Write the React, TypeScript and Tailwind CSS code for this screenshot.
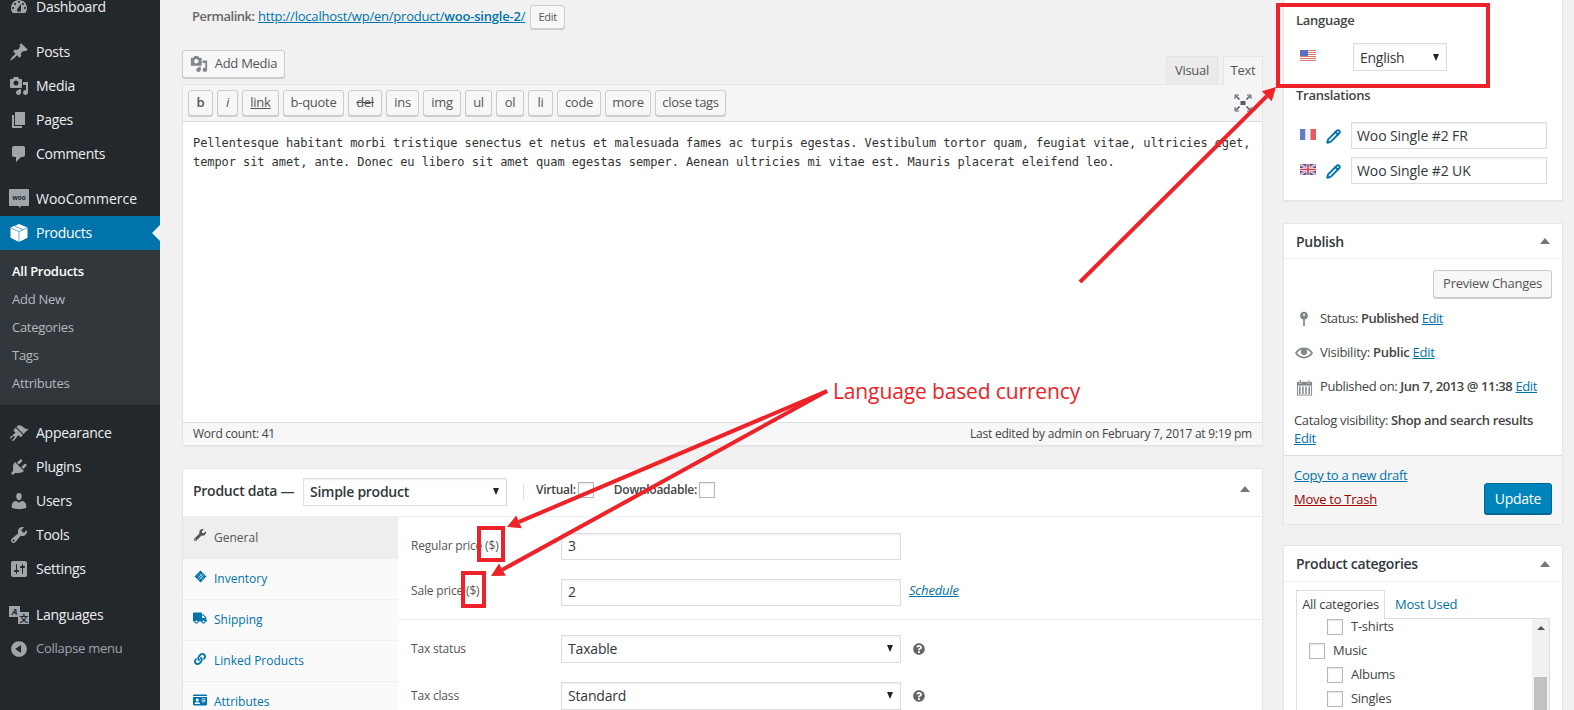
import type { ReactNode } from 'react';
import { Pencil } from 'lucide-react';
import { FaWrench, FaTruck, FaLink, FaIdCard, FaQuestionCircle } from 'react-icons/fa';

const Dash = ({ d, className = 'text-[#a0a5aa]', size = 20 }: { d: string; className?: string; size?: number }) => (
  <svg viewBox="0 0 20 20" width={size} height={size} fill="currentColor" fillRule="evenodd" className={className}>
    <path d={d} />
  </svg>
);

const ICONS = {
  dashboard:
    'M3.76 16h12.48c1.1-1.37 1.76-3.11 1.76-5 0-4.42-3.58-8-8-8s-8 3.58-8 8c0 1.89.66 3.63 1.76 5zM10 4c.55 0 1 .45 1 1s-.45 1-1 1-1-.45-1-1 .45-1 1-1zM6 6c.55 0 1 .45 1 1s-.45 1-1 1-1-.45-1-1 .45-1 1-1zm8 0c.55 0 1 .45 1 1s-.45 1-1 1-1-.45-1-1 .45-1 1-1zm-5.37 5.55L12 7v6c0 1.1-.9 2-2 2s-2-.9-2-2c0-.57.24-1.08.63-1.45zM4 10c.55 0 1 .45 1 1s-.45 1-1 1-1-.45-1-1 .45-1 1-1zm12 0c.55 0 1 .45 1 1s-.45 1-1 1-1-.45-1-1 .45-1 1-1z',
  posts:
    'M10.44 3.02l1.82-1.82 6.36 6.35-1.83 1.82c-1.05-.68-2.48-.57-3.41.36l-.75.75c-.92.93-1.04 2.35-.35 3.41l-1.83 1.82-2.41-2.41-2.8 2.79c-.42.42-3.38 2.71-3.8 2.29s1.86-3.39 2.28-3.81l2.79-2.79L4.1 9.36l1.83-1.82c1.05.69 2.48.57 3.4-.36l.75-.75c.93-.92 1.05-2.35.36-3.41z',
  media:
    'M13 11V4c0-.55-.45-1-1-1h-1.67L9 1H5L3.67 3H2c-.55 0-1 .45-1 1v7c0 .55.45 1 1 1h10c.55 0 1-.45 1-1zM7 4.5c1.38 0 2.5 1.12 2.5 2.5S8.38 9.5 7 9.5 4.5 8.38 4.5 7 5.62 4.5 7 4.5zM14 6h5v10.5c0 1.38-1.12 2.5-2.5 2.5S14 17.88 14 16.5s1.12-2.5 2.5-2.5c.17 0 .34.02.5.05V9h-3V6zm-4 8.05V13h2v3.5c0 1.38-1.12 2.5-2.5 2.5S7 17.88 7 16.5 8.12 14 9.5 14c.17 0 .34.02.5.05z',
  pages: 'M6 15V2h10v13H6zm-1 1h8v2H3V5h2v11z',
  comments: 'M5 2h9c1.1 0 2 .9 2 2v7c0 1.1-.9 2-2 2h-2l-5 5v-5H5c-1.1 0-2-.9-2-2V4c0-1.1.9-2 2-2z',
  appearance:
    'M14.48 11.06L7.41 3.99l1.5-1.5c.5-.56 2.3-.47 3.51.32 1.21.8 1.43 1.28 2.91 2.1 1.18.64 2.45 1.26 4.45.85zm-.71.71L6.7 4.7 4.93 6.47c-.39.39-.39 1.02 0 1.41l1.06 1.06c.39.39.39 1.03 0 1.42-.6.6-1.43 1.11-2.21 1.69-.35.26-.7.53-1.01.84C1.43 13.23 1 14.1 1 15c0 .36.1.7.25 1l2.7-2.69c.39-.39 1.03-.39 1.42 0s.39 1.03 0 1.41l-2.7 2.7c.3.15.64.24 1 .24.9 0 1.77-.43 2.58-1.77.31-.31.58-.66.84-1.01.58-.78 1.09-1.61 1.69-2.21.39-.39 1.03-.39 1.42 0l1.06 1.06c.39.39 1.02.39 1.41 0z',
  plugins:
    'M13.11 4.36L9.87 7.6 8 5.73l3.24-3.24c.35-.34 1.05-.2 1.56.32.52.51.66 1.21.31 1.55zm-8 1.77l.91-1.12 9.01 9.01-1.19.84c-.71.71-2.63 1.16-3.82 1.16H6.14L4.9 17.26c-.59.59-1.54.59-2.12 0-.59-.58-.59-1.53 0-2.12l1.24-1.24v-3.88c0-1.13.4-3.19 1.09-3.89zm7.26 3.97l3.24-3.24c.34-.35 1.04-.21 1.55.31.52.51.66 1.21.31 1.55l-3.24 3.25z',
  users:
    'M10 9.25c-2.27 0-2.73-3.44-2.73-3.44C7 4.02 7.82 2 9.97 2c2.16 0 2.98 2.02 2.71 3.81 0 0-.41 3.44-2.68 3.44zm0 2.57L12.72 10c2.39 0 4.52 2.33 4.52 4.53v2.49s-3.65 1.13-7.24 1.13c-3.65 0-7.24-1.13-7.24-1.13v-2.49c0-2.25 1.94-4.48 4.47-4.48z',
  tools:
    'M16.68 9.77c-1.34 1.34-3.3 1.67-4.95.99l-5.41 6.52c-.99.99-2.59.99-3.58 0s-.99-2.59 0-3.57l6.52-5.42c-.68-1.65-.35-3.61.99-4.95 1.28-1.28 3.12-1.62 4.72-1.06l-2.89 2.89 2.82 2.82 2.86-2.87c.53 1.58.18 3.39-1.08 4.67zM3.81 16.21c.4.39 1.04.39 1.43 0 .4-.4.4-1.04 0-1.43-.39-.4-1.03-.4-1.43 0-.39.39-.39 1.03 0 1.43z',
  settings:
    'M18 16V4c0-1.1-.9-2-2-2H4c-1.1 0-2 .9-2 2v12c0 1.1.9 2 2 2h12c1.1 0 2-.9 2-2zM8 11h1c.55 0 1 .45 1 1s-.45 1-1 1H8v1.5c0 .28-.22.5-.5.5s-.5-.22-.5-.5V13H6c-.55 0-1-.45-1-1s.45-1 1-1h1V5.5c0-.28.22-.5.5-.5s.5.22.5.5V11zm5-2h-1c-.55 0-1-.45-1-1s.45-1 1-1h1V5.5c0-.28.22-.5.5-.5s.5.22.5.5V7h1c.55 0 1 .45 1 1s-.45 1-1 1h-1v5.5c0 .28-.22.5-.5.5s-.5-.22-.5-.5V9z',
  collapse: 'M10 2.16c4.33 0 7.84 3.51 7.84 7.84s-3.51 7.84-7.84 7.84S2.16 14.33 2.16 10 5.71 2.16 10 2.16zm2 11.72V6.12L6.18 9.97z',
  eye: 'M19.7 9.4C17.7 6 14 3.9 10 3.9S2.3 6 .3 9.4L0 10l.3.6c2 3.4 5.7 5.5 9.7 5.5s7.7-2.1 9.7-5.5l.3-.6-.3-.6zM10 14.1c-3.1 0-6-1.6-7.7-4.1C3.6 8 5.7 6.6 8 6.1c-.9.6-1.5 1.7-1.5 2.9 0 1.9 1.6 3.5 3.5 3.5s3.5-1.6 3.5-3.5c0-1.2-.6-2.3-1.5-2.9 2.3.5 4.4 1.9 5.7 3.9-1.7 2.5-4.6 4.1-7.7 4.1z',
};

const WooIcon = () => (
  <svg viewBox="0 0 20 20" width={20} height={20}>
    <path d="M1 0h18a1 1 0 0 1 1 1v15a1 1 0 0 1-1 1h-7l-1.5 2.5L10 17H1a1 1 0 0 1-1-1V1a1 1 0 0 1 1-1z" fill="#a0a5aa" />
    <text x="10" y="10.5" textAnchor="middle" fontSize="6.5" fontWeight="700" letterSpacing="0" fill="#23282d" fontFamily="Open Sans, sans-serif">woo</text>
  </svg>
);

const BoxIcon = () => (
  <svg viewBox="0 0 20 20" width={20} height={20}>
    <path d="M10 1l8.5 3.6v10.2L10 19l-8.5-4.2V4.6z" fill="#fff" />
    <path d="M1.5 4.8L10 8.6l8.5-3.8M10 8.6V19M5.5 3l8.5 3.7" stroke="#0073aa" strokeWidth="0.6" fill="none" />
  </svg>
);

const TranslateIcon = () => (
  <svg viewBox="0 0 20 20" width={20} height={20}>
    <rect x="0" y="1" width="11" height="11" fill="#a0a5aa" />
    <text x="5.5" y="10" textAnchor="middle" fontSize="9" fontStyle="italic" fontWeight="700" fill="#23282d" fontFamily="Open Sans, sans-serif">A</text>
    <rect x="9" y="7" width="11" height="12" fill="#a0a5aa" />
    <text x="14.5" y="17" textAnchor="middle" fontSize="9" fontWeight="700" fill="#23282d" fontFamily="Noto Sans CJK SC, sans-serif">文</text>
  </svg>
);

function MenuItem({ icon, label, active, dim, labelClass = 'text-[14px]' }: { icon: ReactNode; label: string; active?: boolean; dim?: boolean; labelClass?: string }) {
  return (
    <div className={`relative flex h-[34px] items-center ${active ? 'bg-[#0073aa] text-white' : dim ? 'text-[#a0a5aa]' : 'text-[#eeeeee]'}`}>
      <span className="flex w-9 justify-center pl-px">{icon}</span>
      <span className={`-mt-px ${labelClass}`}>{label}</span>
      {active && <span className="absolute right-0 top-[9px] h-0 w-0 border-y-[8px] border-r-[8px] border-y-transparent border-r-[#f1f1f1]" />}
    </div>
  );
}

function Sidebar() {
  const d = (k: keyof typeof ICONS) => <Dash d={ICONS[k]} />;
  return (
    <aside className="h-full w-40 shrink-0 overflow-hidden bg-[#23282d]">
      <div className="-mt-[10px]">
        <MenuItem icon={d('dashboard')} label="Dashboard" />
        <div className="h-[11px]" />
        <MenuItem icon={d('posts')} label="Posts" />
        <MenuItem icon={d('media')} label="Media" />
        <MenuItem icon={d('pages')} label="Pages" />
        <MenuItem icon={d('comments')} label="Comments" />
        <div className="h-[11px]" />
        <MenuItem icon={<WooIcon />} label="WooCommerce" labelClass="text-[14px] tracking-normal" />
        <MenuItem icon={<BoxIcon />} label="Products" active />
        <div className="bg-[#32373c] pb-[7px] pt-[8px] text-[13px] text-[#b4b9be]">
          <div className="flex h-7 items-center pl-3 font-semibold text-white">All Products</div>
          <div className="flex h-7 items-center pl-3">Add New</div>
          <div className="flex h-7 items-center pl-3">Categories</div>
          <div className="flex h-7 items-center pl-3">Tags</div>
          <div className="flex h-7 items-center pl-3">Attributes</div>
        </div>
        <div className="h-[11px]" />
        <MenuItem icon={d('appearance')} label="Appearance" />
        <MenuItem icon={d('plugins')} label="Plugins" />
        <MenuItem icon={d('users')} label="Users" />
        <MenuItem icon={d('tools')} label="Tools" />
        <MenuItem icon={d('settings')} label="Settings" />
        <div className="h-3" />
        <MenuItem icon={<TranslateIcon />} label="Languages" />
        <MenuItem icon={d('collapse')} label="Collapse menu" dim labelClass="text-[13px]" />
      </div>
    </aside>
  );
}

const toolbarButtons = [
  { label: 'b', cls: 'w-[25px] font-semibold' },
  { label: 'i', cls: 'w-[21px] italic' },
  { label: 'link', cls: 'w-[37px] underline' },
  { label: 'b-quote', cls: 'w-[61px]' },
  { label: 'del', cls: 'w-[34px] line-through' },
  { label: 'ins', cls: 'w-[33px]' },
  { label: 'img', cls: 'w-[38px]' },
  { label: 'ul', cls: 'w-[27px]' },
  { label: 'ol', cls: 'w-[28px]' },
  { label: 'li', cls: 'w-[25px]' },
  { label: 'code', cls: 'w-[44px]' },
  { label: 'more', cls: 'w-[46px]' },
  { label: 'close tags', cls: 'w-[71px]' },
];

const btn = 'flex items-center justify-center rounded-[3px] border border-[#cccccc] bg-[#f7f7f7] text-[#555555] shadow-[0_1px_0_#cccccc]';

function FullscreenIcon() {
  return (
    <svg viewBox="0 0 18 18" width={18} height={18} fill="none" stroke="#555d66" strokeWidth="1.6">
      <rect x="6.5" y="7" width="5" height="4" fill="#555d66" stroke="none" />
      <path d="M2 2l3.5 3.5M16 2l-3.5 3.5M2 16l3.5-3.5M16 16l-3.5-3.5" />
      <path d="M1 5V1h4M13 1h4v4M1 13v4h4M13 17h4v-4" strokeWidth="1" />
    </svg>
  );
}

function Editor() {
  return (
    <div>
      <div className="flex h-[34px] justify-between">
        <div className={`${btn} h-7 w-[103px] gap-[7px] text-[13px]`}>
          <Dash d={ICONS.media} size={18} className="text-[#82878c]" />
          Add Media
        </div>
        <div className="flex items-end gap-[5px] pr-0">
          <div className="flex h-7 w-[52px] items-center justify-center border border-b-0 border-[#e5e5e5] bg-[#ebebeb] text-[13px] text-[#555555]">Visual</div>
          <div className="relative z-10 -mb-px flex h-[29px] w-10 items-center justify-center border border-b-0 border-[#e5e5e5] bg-[#f5f5f5] text-[13px] text-[#555555]">Text</div>
        </div>
      </div>
      <div className="border border-[#e5e5e5] shadow-[0_1px_1px_rgba(0,0,0,0.04)]">
        <div className="flex h-[37px] items-center justify-between border-b border-[#dddddd] bg-[#f5f5f5] pl-[5px] pr-[10px]">
          <div className="flex gap-1">
            {toolbarButtons.map((b) => (
              <div key={b.label} className={`${btn} h-[26px] text-[13px] ${b.cls}`}>{b.label}</div>
            ))}
          </div>
          <FullscreenIcon />
        </div>
        <div className="h-[300px] bg-white pl-[10px] pr-2 pt-[12px] font-['DejaVu_Sans_Mono',monospace] text-[12px] leading-[19px] tracking-[-0.08px] text-[#333333]">
          Pellentesque habitant morbi tristique senectus et netus et malesuada fames ac turpis egestas. Vestibulum tortor quam, feugiat vitae, ultricies eget, tempor sit amet, ante. Donec eu libero sit amet quam egestas semper. Aenean ultricies mi vitae est. Mauris placerat eleifend leo.
        </div>
        <div className="flex h-[23px] items-center justify-between border-t border-[#dddddd] bg-[#f7f7f7] px-[10px] text-[12px] text-[#444444]">
          <span>Word count: 41</span>
          <span className="tracking-[-0.23px]">Last edited by admin on February 7, 2017 at 9:19 pm</span>
        </div>
      </div>
    </div>
  );
}

const UpArrow = () => <span className="h-0 w-0 border-x-[5px] border-b-[6px] border-x-transparent border-b-[#72777c]" />;

const SelectArrow = () => <span className="h-0 w-0 border-x-[3.5px] border-t-[7px] border-x-transparent border-t-[#222222]" />;

function FakeSelect({ value, className }: { value: string; className: string }) {
  return (
    <div className={`flex h-7 items-center justify-between border border-[#dddddd] bg-white pl-[6px] pr-[7px] text-[#32373c] shadow-[inset_0_1px_2px_rgba(0,0,0,0.07)] ${className}`}>
      <span>{value}</span>
      <SelectArrow />
    </div>
  );
}

const field = 'block border border-[#dddddd] bg-white text-[#32373c] tracking-[-0.1px] shadow-[inset_0_1px_2px_rgba(0,0,0,0.07)] outline-none';

const Check = ({ className = '' }: { className?: string }) => (
  <span className={`block h-4 w-4 shrink-0 border border-[#b4b9be] bg-white shadow-[inset_0_1px_2px_rgba(0,0,0,0.1)] ${className}`} />
);

function InventoryIcon() {
  return (
    <svg viewBox="0 0 14 14" width={13} height={13}>
      <rect x="2.5" y="2.5" width="9" height="9" transform="rotate(45 7 7)" fill="#0073aa" />
      <path d="M4.5 5.5l5 5M6 4l5 5M9.5 3.5l-6 6M11 5l-6 6" stroke="#fff" strokeWidth="0.6" />
    </svg>
  );
}

function ProductTab({ icon, label, active, className }: { icon: ReactNode; label: string; active?: boolean; className: string }) {
  return (
    <div className={`flex items-center gap-[7px] border-b border-[#eeeeee] pl-[10px] text-[12px] tracking-normal ${active ? 'bg-[#eeeeee] text-[#555555]' : 'text-[#0073aa]'} ${className}`}>
      <span className={`mb-[5px] flex w-[14px] justify-center ${active ? 'text-[#555555]' : 'text-[#0073aa]'}`}>{icon}</span>
      {label}
    </div>
  );
}

function ProductData() {
  return (
    <div className="mt-[22px] border border-[#e5e5e5] bg-white shadow-[0_1px_1px_rgba(0,0,0,0.04)]">
      <div className="flex h-[48px] items-center border-b border-[#eeeeee] pb-[2px] pl-[10px] pr-[12px] text-[13px]">
        <span className="mb-[2px] w-[110px] text-[14px] font-semibold text-[#32373c]">Product data —</span>
        <FakeSelect value="Simple product" className="w-[204px] text-[14px] font-semibold" />
        <span className="ml-4 h-4 w-px bg-[#dddddd]" />
        <span className="mb-1 ml-3 text-[12px] font-semibold text-[#444444]">Virtual:</span>
        <Check className="mb-1 ml-[2px]" />
        <span className="mb-1 ml-5 text-[12px] font-semibold text-[#444444]">Downloadable:</span>
        <Check className="mb-1 ml-[2px]" />
        <span className="mb-[5px] ml-auto flex"><UpArrow /></span>
      </div>
      <div className="flex">
        <div className="w-[215px] shrink-0 bg-[#fafafa]">
          <ProductTab active icon={<FaWrench size={12} />} label="General" className="h-[42px]" />
          <ProductTab icon={<InventoryIcon />} label="Inventory" className="h-[41px]" />
          <ProductTab icon={<FaTruck size={14} />} label="Shipping" className="h-[41px]" />
          <ProductTab icon={<FaLink size={12} />} label="Linked Products" className="h-[41px]" />
          <ProductTab icon={<FaIdCard size={14} />} label="Attributes" className="h-[41px]" />
        </div>
        <div className="flex-1 text-[12px] tracking-[-0.18px] text-[#555555]">
          <div className="flex flex-col gap-[19px] border-b border-[#eeeeee] pb-[13px] pl-[13px] pt-[16px]">
            <div className="flex items-center">
              <span className="w-[150px] pb-[2px]">Regular price ($)</span>
              <input readOnly value="3" className={`${field} h-[27px] w-[340px] pb-[2px] pl-[6px] text-[14px]`} />
            </div>
            <div className="flex items-center">
              <span className="w-[150px] pb-1">Sale price ($)</span>
              <input readOnly value="2" className={`${field} h-[27px] w-[340px] pb-[2px] pl-[6px] text-[14px]`} />
              <span className="ml-2 pb-[3px] text-[13px] italic text-[#0073aa] underline">Schedule</span>
            </div>
          </div>
          <div className="flex flex-col gap-[19px] pl-[13px] pt-[15px]">
            <div className="flex items-center">
              <span className="w-[150px]">Tax status</span>
              <FakeSelect value="Taxable" className="w-[340px] pb-[2px] text-[14px]" />
              <FaQuestionCircle size={12} className="ml-3 text-[#666666]" />
            </div>
            <div className="flex items-center">
              <span className="w-[150px]">Tax class</span>
              <FakeSelect value="Standard" className="w-[340px] pb-[2px] text-[14px]" />
              <FaQuestionCircle size={12} className="ml-3 text-[#666666]" />
            </div>
          </div>
        </div>
      </div>
    </div>
  );
}

const FlagUS = () => (
  <svg viewBox="0 0 16 11" width={16} height={11}>
    <rect width="16" height="11" fill="#fff" />
    <path d="M0 .5h16M0 2.5h16M0 4.5h16M0 6.5h16M0 8.5h16M0 10.5h16" stroke="#e0726e" strokeWidth="1" />
    <rect width="8" height="6" fill="#5a6fc0" />
  </svg>
);

const FlagFR = () => (
  <svg viewBox="0 0 16 11" width={16} height={11}>
    <rect width="5.5" height="11" fill="#5f7cc8" />
    <rect x="5.5" width="5" height="11" fill="#f3f3f8" />
    <rect x="10.5" width="5.5" height="11" fill="#e8585e" />
  </svg>
);

const FlagUK = () => (
  <svg viewBox="0 0 16 11" width={16} height={11}>
    <rect width="16" height="11" fill="#4a5aa0" />
    <path d="M0 0l16 11M16 0L0 11" stroke="#fff" strokeWidth="2" />
    <path d="M0 0l16 11M16 0L0 11" stroke="#d9384a" strokeWidth="0.7" />
    <path d="M8 0v11M0 5.5h16" stroke="#fff" strokeWidth="3" />
    <path d="M8 0v11M0 5.5h16" stroke="#d9384a" strokeWidth="1.6" />
  </svg>
);

const Panel = ({ children, className = '' }: { children: ReactNode; className?: string }) => (
  <div className={`border border-[#e5e5e5] bg-white shadow-[0_1px_1px_rgba(0,0,0,0.04)] ${className}`}>{children}</div>
);

function PanelHead({ title, className }: { title: string; className: string }) {
  return (
    <div className={`flex items-center justify-between border-b border-[#eeeeee] pl-3 pr-[12px] text-[14px] font-semibold text-[#32373c] ${className}`}>
      {title}
      <UpArrow />
    </div>
  );
}

const Edit = () => <span className="font-normal text-[#0073aa] underline">Edit</span>;

function PinIcon() {
  return (
    <svg viewBox="0 0 12 18" width={10} height={16} fill="#82878c">
      <circle cx="6" cy="5" r="4.6" />
      <rect x="5" y="8" width="2" height="9.5" />
      <circle cx="6" cy="4" r="1.2" fill="#fff" />
    </svg>
  );
}

function CalendarIcon() {
  return (
    <svg viewBox="0 0 18 18" width={17} height={17}>
      <rect x="1" y="3" width="16" height="14.5" fill="#82878c" />
      <rect x="3.5" y="1" width="2" height="4" fill="#82878c" stroke="#fff" strokeWidth="0.5" />
      <rect x="12.5" y="1" width="2" height="4" fill="#82878c" stroke="#fff" strokeWidth="0.5" />
      <rect x="2" y="7" width="14" height="9.5" fill="#fff" />
      <path d="M4 8v8M7.3 8v8M10.6 8v8M14 8v8" stroke="#82878c" strokeWidth="1.6" />
    </svg>
  );
}

function SideColumn() {
  return (
    <div className="ml-[20px] w-[280px] shrink-0 text-[13px] text-[#444444]">
      <Panel className="h-[201px] border-t-0 pl-[12px]">
        <div className="pt-[11px] font-semibold leading-[18px] text-[#444444]">Language</div>
        <div className="mt-[14px] flex items-start">
          <span className="ml-1 mt-[7px]"><FlagUS /></span>
          <FakeSelect value="English" className="ml-[37px] w-[94px] text-[14px]" />
        </div>
        <div className="mt-[15px] font-semibold leading-[18px]">Translations</div>
        <div className="mt-[18px] flex flex-col gap-2">
          <div className="flex items-start">
            <span className="ml-1 mt-[7px]"><FlagFR /></span>
            <Pencil size={15} strokeWidth={3} className="ml-[10px] mt-[7px] text-[#0073aa]" />
            <input readOnly value="Woo Single #2 FR" className={`${field} ml-[10px] h-[27px] w-[196px] pl-[5px] text-[14px]`} />
          </div>
          <div className="flex items-start">
            <span className="ml-1 mt-[7px]"><FlagUK /></span>
            <Pencil size={15} strokeWidth={3} className="ml-[10px] mt-[7px] text-[#0073aa]" />
            <input readOnly value="Woo Single #2 UK" className={`${field} ml-[10px] h-[27px] w-[196px] pl-[5px] text-[14px]`} />
          </div>
        </div>
      </Panel>

      <Panel className="mt-[22px] h-[301px]">
        <PanelHead title="Publish" className="h-[35px]" />
        <div className="flex justify-end pr-[10px] pt-[11px]">
          <div className={`${btn} h-[28px] w-[119px] text-[13px]`}>Preview Changes</div>
        </div>
        <div className="mt-1 pl-[10px]">
          <div className="flex h-[34px] items-center">
            <span className="flex w-[26px] justify-center pr-[6px]"><PinIcon /></span>
            <span className="tracking-[-0.45px]">Status: <b className="font-semibold">Published</b> <Edit /></span>
          </div>
          <div className="flex h-[34px] items-center">
            <span className="flex w-[26px] justify-center pr-[6px]"><Dash d={ICONS.eye} size={18} className="text-[#82878c]" /></span>
            <span>Visibility: <b className="font-semibold">Public</b> <Edit /></span>
          </div>
          <div className="flex h-[34px] items-center">
            <span className="flex w-[26px] justify-center pr-[6px]"><CalendarIcon /></span>
            <span className="tracking-[-0.39px]">Published on: <b className="font-semibold">Jun 7, 2013 @ 11:38</b> <Edit /></span>
          </div>
          <div className="pt-[7px] leading-[18px] tracking-[-0.34px]">
            Catalog visibility: <b className="font-semibold">Shop and search results</b>
            <br />
            <Edit />
          </div>
        </div>
        <div className="mt-2 flex h-[69px] items-end justify-between border-t border-[#dddddd] bg-[#f5f5f5] pb-[10px] pl-[10px] pr-[10px]">
          <div className="pb-[6px] leading-[18px]">
            <div className="text-[#0073aa] underline">Copy to a new draft</div>
            <div className="mt-[6px] text-[#a00000] underline">Move to Trash</div>
          </div>
          <div className="flex h-[31px] w-[68px] items-center justify-center rounded-[3px] border border-[#006799] bg-[#0085ba] text-[14px] text-white shadow-[0_1px_0_#006799]">Update</div>
        </div>
      </Panel>

      <Panel className="mt-[21px] h-[200px]">
        <PanelHead title="Product categories" className="h-[36px]" />
        <div className="pl-[12px] pr-3 pt-[8px]">
          <div className="flex h-[28px] items-end">
            <div className="relative z-10 -mb-px flex h-[29px] w-[89px] items-center justify-center border border-b-0 border-[#dddddd] bg-white">All categories</div>
            <div className="ml-[10px] pb-[4px] text-[#0073aa]">Most Used</div>
          </div>
          <div className="flex h-[120px] overflow-hidden border border-[#dddddd]">
            <div className="-mt-[4px] flex-1 pl-[12px]">
              {[
                { label: 'T-shirts', nested: true },
                { label: 'Music', nested: false },
                { label: 'Albums', nested: true },
                { label: 'Singles', nested: true },
              ].map((c) => (
                <div key={c.label} className={`flex h-6 items-center gap-2 ${c.nested ? 'pl-[18px]' : ''}`}>
                  <Check />
                  {c.label}
                </div>
              ))}
            </div>
            <div className="flex w-[17px] flex-col items-center bg-[#f1f1f1]">
              <span className="mt-[7px] h-0 w-0 border-x-[4px] border-b-[4px] border-x-transparent border-b-[#505050]" />
              <span className="mt-[47px] h-[70px] w-[13px] bg-[#c1c1c1]" />
            </div>
          </div>
        </div>
      </Panel>
    </div>
  );
}

// red arrow from tail to head, head drawn as a triangle
function Arrow({ x1, y1, x2, y2, hw = 7, hl = 13 }: { x1: number; y1: number; x2: number; y2: number; hw?: number; hl?: number }) {
  const len = Math.hypot(x2 - x1, y2 - y1);
  const ux = (x2 - x1) / len;
  const uy = (y2 - y1) / len;
  const bx = x2 - ux * hl;
  const by = y2 - uy * hl;
  const pts = `${x2},${y2} ${bx - uy * hw},${by + ux * hw} ${bx + uy * hw},${by - ux * hw}`;
  return (
    <>
      <line x1={x1} y1={y1} x2={bx} y2={by} stroke="#ed2329" strokeWidth="4" />
      <polygon points={pts} fill="#ed2329" />
    </>
  );
}

function Annotations() {
  return (
    <>
      <svg className="pointer-events-none absolute inset-0 z-20" width={1574} height={710}>
        <rect x={1278} y={5} width={210} height={81} fill="none" stroke="#ed2329" strokeWidth="4" />
        <rect x={479} y={528} width={24} height={32} fill="none" stroke="#ed2329" strokeWidth="4" />
        <rect x={463} y={573} width={21} height={33} fill="none" stroke="#ed2329" strokeWidth="4" />
        <Arrow x1={1080} y1={282} x2={1276} y2={87} />
        <Arrow x1={827} y1={391} x2={507} y2={527} />
        <Arrow x1={827} y1={391} x2={491} y2={576} />
      </svg>
      <div className="absolute left-[833px] top-[376px] z-20 text-[21px] leading-[30px] tracking-[-0.13px] text-[#ed2329]">Language based currency</div>
    </>
  );
}

export default function App() {
  return (
    <div className="relative flex h-[710px] w-[1574px] overflow-hidden bg-[#f1f1f1] font-['Open_Sans',sans-serif] tracking-[-0.27px]">
      <Sidebar />
      <div className="ml-[22px] w-[1081px] shrink-0">
        <div className="flex h-[50px] items-start pl-[10px] pt-[5px] text-[13px] text-[#666666]">
          <div className="flex h-6 items-center">
            <span className="w-[66px] font-semibold tracking-[-0.5px]">Permalink:</span>
            <span className="text-[#0073aa] underline tracking-[-0.21px]">http://localhost/wp/en/product/<b className="font-semibold">woo-single-2</b>/</span>
            <div className={`${btn} ml-[5px] h-6 w-[35px] text-[11px]`}>Edit</div>
          </div>
        </div>
        <Editor />
        <ProductData />
      </div>
      <SideColumn />
      <Annotations />
    </div>
  );
}
